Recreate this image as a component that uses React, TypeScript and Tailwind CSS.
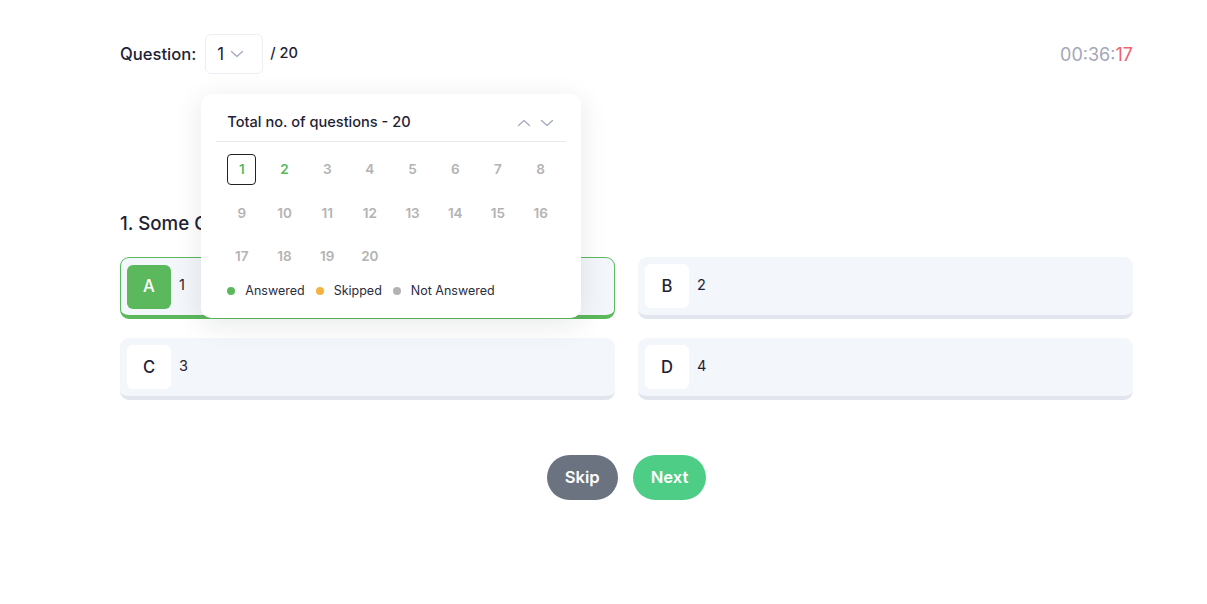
import React from "react";

const Chevron = ({ dir, className }: { dir: "up" | "down"; className?: string }) => (
  <svg width="16" height="16" viewBox="0 0 16 16" fill="none" className={className}>
    {dir === "down" ? (
      <path d="M2.5 5.5L8 10.5L13.5 5.5" stroke="currentColor" strokeWidth="1.3" strokeLinecap="round" strokeLinejoin="round" />
    ) : (
      <path d="M2.5 10.5L8 5.5L13.5 10.5" stroke="currentColor" strokeWidth="1.3" strokeLinecap="round" strokeLinejoin="round" />
    )}
  </svg>
);

const nums = Array.from({ length: 20 }, (_, i) => i + 1);

function Popup() {
  return (
    <div className="absolute left-[-4px] top-[60px] z-10 w-[380px] h-[224px] rounded-[10px] bg-white shadow-[0_6px_28px_rgba(20,25,40,0.10)] px-[15px] pt-[15px]">
      <div className="flex items-center justify-between px-[11px] h-[28px]">
        <span className="text-[14.6px] font-medium text-[#1e2235]">Total no. of questions - 20</span>
        <div className="flex items-center gap-[7px] text-[#a6aac0]">
          <Chevron dir="up" />
          <Chevron dir="down" />
        </div>
      </div>
      <div className="mt-[4px] h-px bg-[#e8e9ee]" />
      <div className="mt-[12px] ml-[11px] grid grid-cols-[repeat(8,29px)] gap-x-[13.7px] gap-y-[12.5px]">
        {nums.map((n) => (
          <div
            key={n}
            className={
              "flex h-[31px] w-[29px] items-center justify-center text-[13.5px] font-semibold rounded-[4px] " +
              (n === 1
                ? "border border-[#222222] text-[#5cb85c]"
                : n === 2
                ? "text-[#5cb85c]"
                : "text-[#b3b3b3]")
            }
          >
            {n}
          </div>
        ))}
      </div>
      <div className="mt-[10px] ml-[11px] flex items-center text-[12.5px] text-[#2a2d3e]">
        <span className="h-[8px] w-[8px] rounded-full bg-[#5cb85c]" />
        <span className="ml-[10px]">Answered</span>
        <span className="ml-[11px] h-[8px] w-[8px] rounded-full bg-[#f4b23e]" />
        <span className="ml-[10px]">Skipped</span>
        <span className="ml-[11px] h-[8px] w-[8px] rounded-full bg-[#b3b3b3]" />
        <span className="ml-[10px]">Not Answered</span>
      </div>
    </div>
  );
}

function Option({ letter, text, selected }: { letter: string; text: string; selected?: boolean }) {
  return (
    <div
      className={
        "flex items-center h-[62px] rounded-[9px] bg-[#f3f6fa] " +
        (selected
          ? "border border-b-4 border-[#5cb85c] px-[6px] pt-[6px] pb-[6px]"
          : "border-b-4 border-[#e2e5ee] px-[7px] pt-[7px] pb-[7px]")
      }
    >
      <div
        className={
          "flex h-[44px] w-[44px] shrink-0 items-center justify-center rounded-[6px] text-[16.6px] font-medium " +
          (selected ? "bg-[#5cb85c] text-white" : "bg-white text-[#1e2235]")
        }
      >
        {letter}
      </div>
      <span className="ml-[8px] text-[14.5px] text-[#1e2235] -mt-[3px]">{text}</span>
    </div>
  );
}

export default function App() {
  return (
    <div className="min-h-[604px] bg-white" style={{ fontFamily: "Inter, 'Noto Sans', sans-serif" }}>
      <div className="ml-[120px] w-[1013px] pt-[34px]">
        <div className="flex items-center justify-between h-[40px]">
          <div className="flex items-center">
            <span className="text-[16.6px] font-medium text-[#1e2235]">Question:</span>
            <div className="relative ml-[9px]">
              <div className="flex h-[40px] w-[58px] items-center rounded-[6px] border border-[#eceef3] pl-[11px]">
                <span className="text-[16.6px] text-[#1e2235]">1</span>
                <Chevron dir="down" className="ml-[5px] text-[#a6aac0]" />
              </div>
              <Popup />
            </div>
            <span className="ml-[7px] text-[14.6px] font-medium text-[#1e2235]">/ 20</span>
          </div>
          <div className="text-[18px] text-[#a3a7b9]">
            00:36:<span className="text-[#f0606f]">17</span>
          </div>
        </div>

        <div className="mt-[136px] text-[18.7px] font-medium leading-[28px] text-[#1e2235]">1. Some Question?</div>

        <div className="mt-[19px] grid grid-cols-2 gap-x-[23px] gap-y-[19px]">
          <Option letter="A" text="1" selected />
          <Option letter="B" text="2" />
          <Option letter="C" text="3" />
          <Option letter="D" text="4" />
        </div>

        <div className="mt-[55px] flex justify-center gap-[15px]">
          <button className="h-[45px] rounded-full bg-[#6b7280] px-[18px] text-[16.6px] font-semibold text-white">Skip</button>
          <button className="h-[45px] rounded-full bg-[#4ecd87] px-[18px] text-[16.6px] font-semibold text-white">Next</button>
        </div>
      </div>
    </div>
  );
}
